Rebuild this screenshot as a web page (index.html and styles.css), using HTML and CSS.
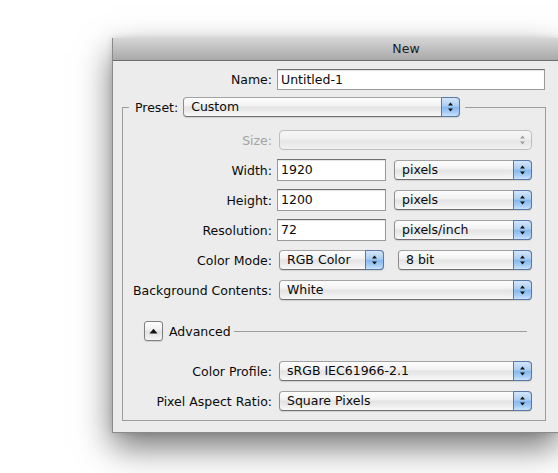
FILE: index.html
```html
<!DOCTYPE html>
<html>
<head>
<meta charset="utf-8">
<link rel="stylesheet" href="styles.css">
</head>
<body>
<div class="window">
  <div class="titlebar">New</div>
  <div class="content">
    <div class="row name-row">
      <span class="lbl">Name:</span>
      <div class="field name-field">Untitled-1</div>
    </div>
    <div class="group">
      <div class="legend">
        <span class="legend-label">Preset:</span>
        <div class="select preset"><span class="val">Custom</span><span class="arrows"><svg width="5" height="10" viewBox="0 0 5 10"><polygon points="0,3.6 2.5,0.4 5,3.6"/><polygon points="0,6.4 2.5,9.6 5,6.4"/></svg></span></div>
      </div>
      <div class="rows">
        <div class="row">
          <span class="lbl disabled">Size:</span>
          <div class="select size-sel off"><span class="val"></span><span class="arrows"><svg width="5" height="10" viewBox="0 0 5 10"><polygon points="0,3.6 2.5,0.4 5,3.6"/><polygon points="0,6.4 2.5,9.6 5,6.4"/></svg></span></div>
        </div>
        <div class="row">
          <span class="lbl">Width:</span>
          <div class="field num">1920</div>
          <div class="select unit"><span class="val">pixels</span><span class="arrows"><svg width="5" height="10" viewBox="0 0 5 10"><polygon points="0,3.6 2.5,0.4 5,3.6"/><polygon points="0,6.4 2.5,9.6 5,6.4"/></svg></span></div>
        </div>
        <div class="row">
          <span class="lbl">Height:</span>
          <div class="field num">1200</div>
          <div class="select unit"><span class="val">pixels</span><span class="arrows"><svg width="5" height="10" viewBox="0 0 5 10"><polygon points="0,3.6 2.5,0.4 5,3.6"/><polygon points="0,6.4 2.5,9.6 5,6.4"/></svg></span></div>
        </div>
        <div class="row">
          <span class="lbl">Resolution:</span>
          <div class="field num">72</div>
          <div class="select unit"><span class="val">pixels/inch</span><span class="arrows"><svg width="5" height="10" viewBox="0 0 5 10"><polygon points="0,3.6 2.5,0.4 5,3.6"/><polygon points="0,6.4 2.5,9.6 5,6.4"/></svg></span></div>
        </div>
        <div class="row">
          <span class="lbl">Color Mode:</span>
          <div class="select mode"><span class="val">RGB Color</span><span class="arrows"><svg width="5" height="10" viewBox="0 0 5 10"><polygon points="0,3.6 2.5,0.4 5,3.6"/><polygon points="0,6.4 2.5,9.6 5,6.4"/></svg></span></div>
          <div class="select bits"><span class="val">8 bit</span><span class="arrows"><svg width="5" height="10" viewBox="0 0 5 10"><polygon points="0,3.6 2.5,0.4 5,3.6"/><polygon points="0,6.4 2.5,9.6 5,6.4"/></svg></span></div>
        </div>
        <div class="row">
          <span class="lbl">Background Contents:</span>
          <div class="select full"><span class="val">White</span><span class="arrows"><svg width="5" height="10" viewBox="0 0 5 10"><polygon points="0,3.6 2.5,0.4 5,3.6"/><polygon points="0,6.4 2.5,9.6 5,6.4"/></svg></span></div>
        </div>
      </div>
      <div class="advanced">
        <div class="disclosure"><svg width="9" height="6" viewBox="0 0 9 6"><polygon points="0.5,5.5 4.5,0.8 8.5,5.5"/></svg></div>
        <span class="adv-label">Advanced</span>
        <div class="adv-line"></div>
      </div>
      <div class="rows adv-rows">
        <div class="row">
          <span class="lbl">Color Profile:</span>
          <div class="select full"><span class="val">sRGB IEC61966-2.1</span><span class="arrows"><svg width="5" height="10" viewBox="0 0 5 10"><polygon points="0,3.6 2.5,0.4 5,3.6"/><polygon points="0,6.4 2.5,9.6 5,6.4"/></svg></span></div>
        </div>
        <div class="row">
          <span class="lbl">Pixel Aspect Ratio:</span>
          <div class="select full"><span class="val">Square Pixels</span><span class="arrows"><svg width="5" height="10" viewBox="0 0 5 10"><polygon points="0,3.6 2.5,0.4 5,3.6"/><polygon points="0,6.4 2.5,9.6 5,6.4"/></svg></span></div>
        </div>
      </div>
    </div>
  </div>
</div>
</body>
</html>
```
FILE: styles.css
```css
html, body {
  margin: 0;
  padding: 0;
  background: #ffffff;
  overflow: hidden;
  width: 558px;
  height: 473px;
}

body {
  font-family: "DejaVu Sans", "Liberation Sans", sans-serif;
  font-size: 12.5px;
  color: #0a0a0a;
}

.window {
  margin: 38px 0 0 112px;
  width: 446px;
  background: #ececec;
  border-left: 1px solid #8a8a8a;
  border-bottom: 1px solid #8a8a8a;
  box-shadow: 0 14px 32px rgba(0, 0, 0, 0.55), 0 0 6px rgba(0, 0, 0, 0.12);
}

.titlebar {
  height: 22px;
  line-height: 22px;
  text-align: center;
  background: linear-gradient(#d6d6d6, #bdbdbd 55%, #a9a9a9);
  border-bottom: 1px solid #6c6c6c;
  color: #1c1c1c;
  padding-left: 140px;
}

.content {
  padding: 8px 0 11px 9px;
}

.row {
  display: flex;
  align-items: center;
  height: 20px;
}

.lbl {
  width: 149px;
  margin-right: 5px;
  text-align: right;
  white-space: nowrap;
}

.name-row .lbl {
  width: 150px;
}

.lbl.disabled {
  color: #a3a3a3;
}

.field {
  box-sizing: border-box;
  height: 21px;
  line-height: 19px;
  padding-left: 3px;
  background: #fff;
  border: 1px solid #9a9a9a;
  border-top-color: #6f6f6f;
  box-shadow: inset 0 1px 1px rgba(0, 0, 0, 0.12);
}

.name-field {
  width: 268px;
  margin-top: 1px;
}

.field.num {
  width: 109px;
  height: 22px;
  line-height: 20px;
}

.group {
  margin-top: 18px;
  width: 424px;
  box-sizing: border-box;
  border: 1px solid #9c9c9c;
  padding-bottom: 9px;
}

.legend {
  display: flex;
  align-items: center;
  height: 20px;
  margin: -11px 0 0 6px;
  padding: 0 5px 0 6px;
  background: #ececec;
  width: max-content;
}

.legend-label {
  margin-right: 5px;
}

.rows {
  display: flex;
  flex-direction: column;
  gap: 10px;
  margin-top: 13px;
}

.select {
  display: flex;
  box-sizing: border-box;
  height: 20px;
  margin-left: 2px;
  border: 1px solid #8e8e8e;
  border-top-color: #a2a2a2;
  border-bottom-color: #707070;
  border-radius: 4px;
  background: linear-gradient(#fdfdfd, #f3f3f3 40%, #e4e4e4 52%, #ececec 75%, #f9f9f9);
  box-shadow: 0 1px 1px rgba(0, 0, 0, 0.12);
}

.select .val {
  flex: 1;
  padding-left: 7px;
  line-height: 17px;
  white-space: nowrap;
  overflow: hidden;
}

.select .arrows {
  display: flex;
  align-items: center;
  justify-content: center;
  width: 17px;
  margin: -1px -1px -1px 0;
  border: 1px solid #5a78a6;
  border-radius: 0 4px 4px 0;
  background: linear-gradient(#d4e6fa, #aacdf3 45%, #86b8ee 52%, #a6cdf6 80%, #cbe3fb);
}

.select .arrows polygon {
  fill: #111;
}

.select.off {
  border-color: #bdbdbd;
  background: linear-gradient(#f7f7f7, #efefef 45%, #e6e6e6 52%, #ebebeb 80%, #f2f2f2);
  box-shadow: none;
}

.select.off .arrows {
  border: none;
  margin: 0;
  background: transparent;
}

.select.off .arrows polygon {
  fill: #a0a0a0;
}

.preset {
  width: 277px;
  margin-left: 0;
}

.size-sel {
  width: 253px;
}

.unit {
  width: 138px;
  margin-left: 8px;
}

.mode {
  width: 105px;
}

.bits {
  width: 134px;
  margin-left: 14px;
}

.full {
  width: 253px;
}

.advanced {
  display: flex;
  align-items: center;
  height: 20px;
  margin: 21px 18px 0 21px;
}

.disclosure {
  box-sizing: border-box;
  width: 19px;
  height: 20px;
  display: flex;
  align-items: center;
  justify-content: center;
  border: 1px solid #7e7e7e;
  border-radius: 3px;
  background: linear-gradient(#fdfdfd, #f0f0f0 45%, #e0e0e0 52%, #ebebeb 80%, #f7f7f7);
  box-shadow: 0 1px 1px rgba(0, 0, 0, 0.12);
}

.disclosure polygon {
  fill: #111;
}

.adv-label {
  margin-left: 6px;
}

.adv-line {
  flex: 1;
  height: 1px;
  margin-left: 3px;
  margin-top: 1px;
  background: #9c9c9c;
}

.adv-rows {
  margin-top: 20px;
}
```
